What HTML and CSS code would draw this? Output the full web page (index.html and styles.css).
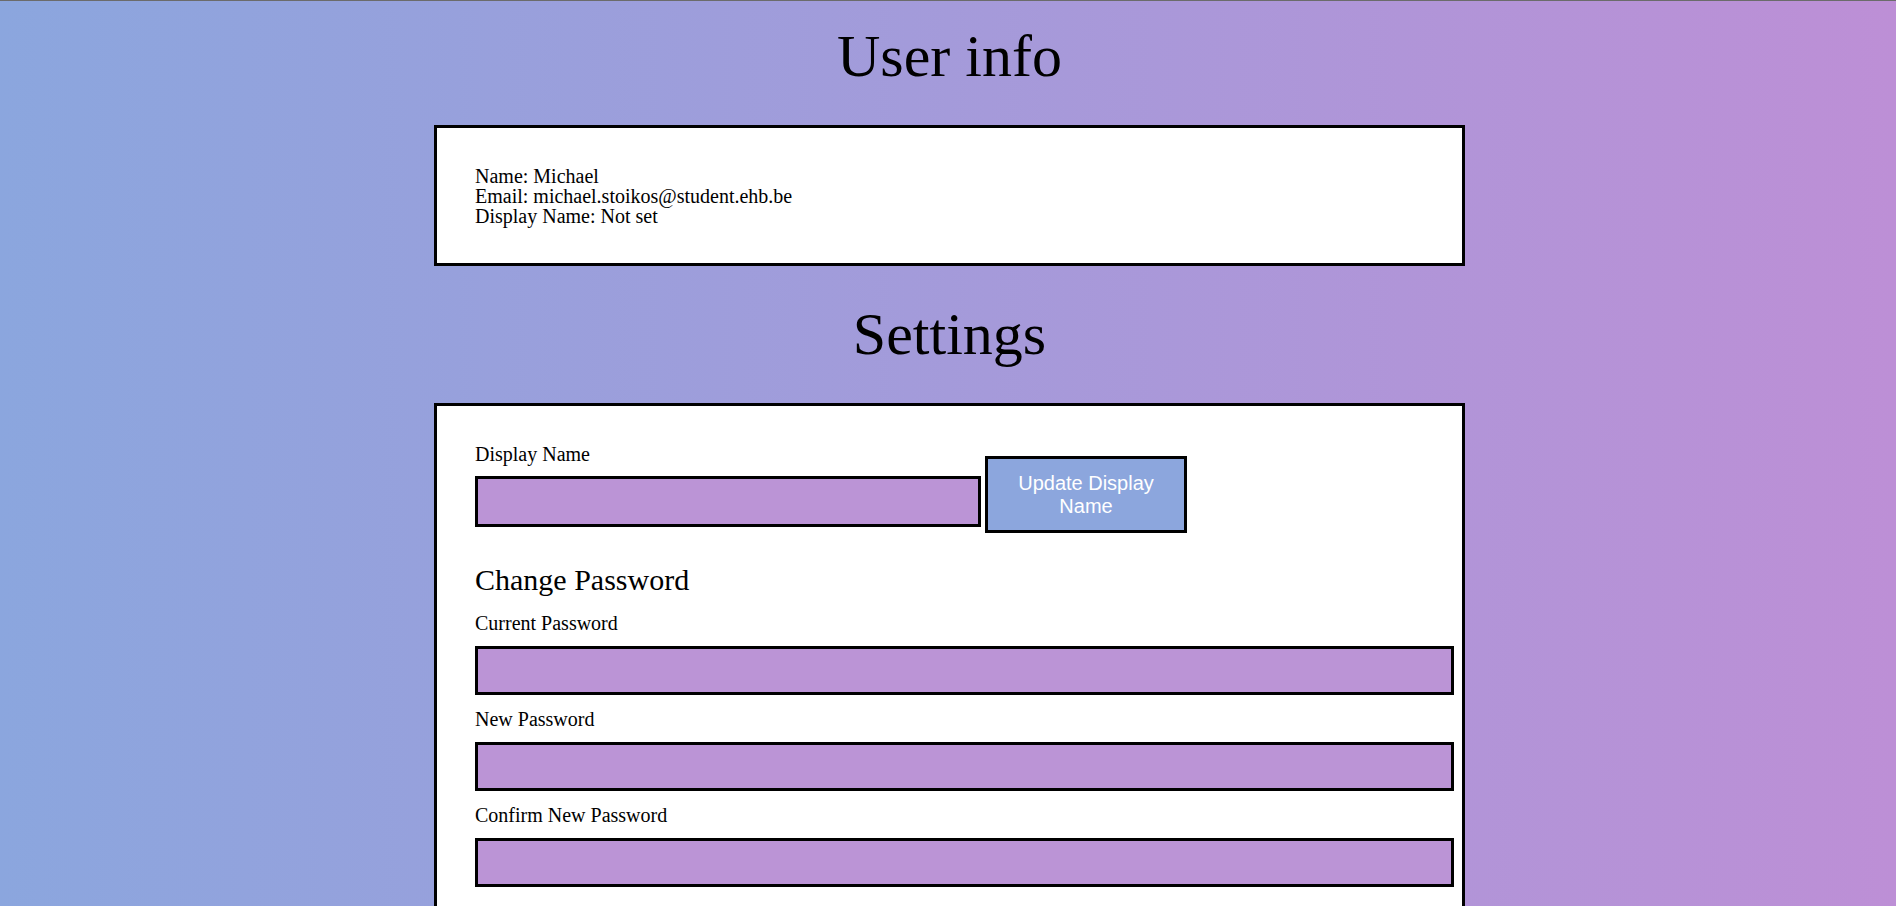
FILE: index.html
```html
<!DOCTYPE html>
<html lang="en">
<head>
    <meta charset="UTF-8">
    <meta name="viewport" content="width=device-width, initial-scale=1.0">
    <title>User info</title>
    <link rel="stylesheet" href="styles.css">
</head>
<body>
    <main class="page">
        <h1 class="page-title first">User info</h1>

        <section class="card info-card">
            <p class="info-text">
                Name: Michael<br>
                Email: michael.stoikos@student.ehb.be<br>
                Display Name: Not set
            </p>
        </section>

        <h1 class="page-title">Settings</h1>

        <section class="card">
            <form class="display-form" onsubmit="return false">
                <div class="field">
                    <label for="display-name">Display Name</label>
                    <input type="text" id="display-name" class="name-input">
                </div>
                <button type="submit" class="update-btn">Update Display Name</button>
            </form>

            <h2 class="section-title">Change Password</h2>

            <form class="password-form" onsubmit="return false">
                <label for="current-password">Current Password</label>
                <input type="password" id="current-password" class="pass-input">

                <label for="new-password">New Password</label>
                <input type="password" id="new-password" class="pass-input">

                <label for="confirm-password">Confirm New Password</label>
                <input type="password" id="confirm-password" class="pass-input">
            </form>
        </section>
    </main>
</body>
</html>
```

FILE: styles.css
```css
html {
    border-top: 1px solid #6b6b6b;
    background: linear-gradient(to right, #8ba6de, #bd8fd6);
}
body {
    margin: 0;
    padding: 0;
    font-family: "Liberation Serif", "Times New Roman", serif;
    color: black;
}
.page {
    display: flex;
    flex-direction: column;
    padding-left: 3px;
}
.page-title {
    font-size: 60px;
    line-height: 69px;
    font-weight: normal;
    text-align: center;
    margin: 34px 0 34px;
}
.page-title.first {
    margin: 21px 0 34px;
}
.card {
    width: 949px;
    margin: 0 auto;
    padding: 38px;
    background-color: white;
    border: 3px solid black;
}
.info-card {
    padding-bottom: 37px;
}
.info-text {
    margin: 0;
    font-size: 20px;
    line-height: 20px;
}
.display-form {
    display: flex;
    align-items: flex-start;
    gap: 4px;
}
.field {
    display: flex;
    flex-direction: column;
}
label {
    display: block;
    font-size: 20px;
    line-height: 20px;
}
.field label {
    margin-bottom: 12px;
}
input {
    margin: 0;
    padding: 0 12px;
    border: 3px solid black;
    border-radius: 0;
    background-color: #bb94d6;
    font-family: "Liberation Serif", serif;
    font-size: 17px;
    outline: none;
}
.name-input {
    width: 476px;
    height: 45px;
}
.update-btn {
    width: 202px;
    margin-top: 12px;
    padding: 12.5px;
    box-sizing: border-box;
    background-color: #8ca6dd;
    color: white;
    border: 3px solid black;
    font-family: "Liberation Sans", Arial, sans-serif;
    font-size: 20px;
    line-height: 23px;
    cursor: pointer;
}
.section-title {
    font-size: 30px;
    line-height: 34px;
    font-weight: normal;
    margin: 30px 0 16px;
}
.password-form label {
    margin-bottom: 13px;
}
.pass-input {
    display: block;
    width: 100%;
    height: 43px;
    margin-bottom: 14px;
}
```
